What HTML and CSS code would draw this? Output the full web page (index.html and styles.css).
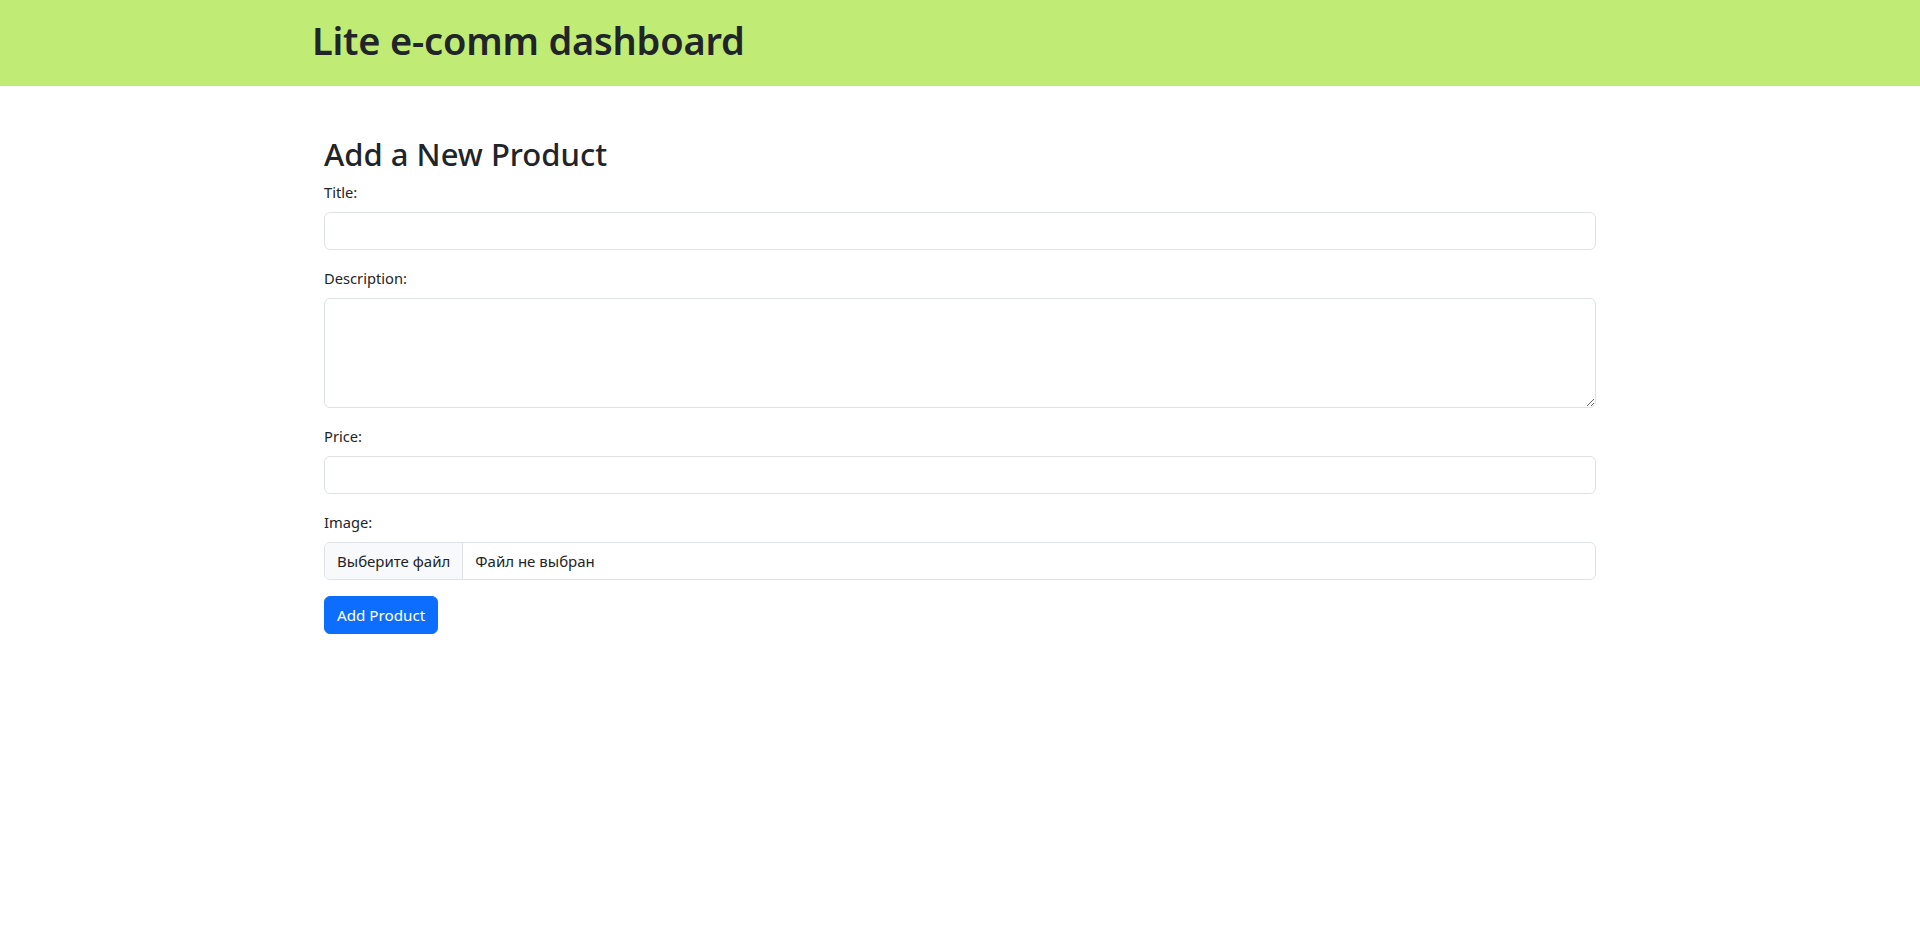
FILE: index.html
```html
<!DOCTYPE html>
<html lang="en">
<head>
<meta charset="utf-8">
<title>Lite e-comm dashboard</title>
<link rel="stylesheet" href="styles.css">
</head>
<body>
<header class="topbar">
  <div class="container">
    <h1 class="brand">Lite e-comm dashboard</h1>
  </div>
</header>
<main class="container main">
  <h2 class="page-title">Add a New Product</h2>
  <form class="product-form">
    <div class="field">
      <label class="field-label" for="title">Title:</label>
      <input class="control" id="title" type="text">
    </div>
    <div class="field">
      <label class="field-label" for="desc">Description:</label>
      <textarea class="control textarea" id="desc" rows="4"></textarea>
    </div>
    <div class="field">
      <label class="field-label" for="price">Price:</label>
      <input class="control" id="price" type="text">
    </div>
    <div class="field">
      <label class="field-label">Image:</label>
      <div class="control file-control">
        <span class="file-btn">Выберите файл</span>
        <span class="file-name">Файл не выбран</span>
      </div>
    </div>
    <button class="submit" type="button">Add Product</button>
  </form>
</main>
</body>
</html>
```

FILE: styles.css
```css
* { box-sizing: border-box; }
html, body { margin: 0; padding: 0; }
body {
  font-family: "Noto Sans", "Open Sans", sans-serif;
  font-size: 16px;
  line-height: 1.5;
  color: #212529;
  background: #fff;
}
.container {
  max-width: 1320px;
  margin: 0 auto;
  padding: 0 12px;
}
.topbar {
  background: #c0ec76;
  height: 86px;
}
.brand {
  margin: 0;
  padding-top: 16px;
  font-size: 38px;
  font-weight: 600;
  line-height: 48px;
  letter-spacing: -0.2px;
}
.main {
  padding: 0 24px;
  margin-top: 49px;
}
.page-title {
  margin: 0 0 7px;
  font-size: 31px;
  font-weight: 500;
  line-height: 38px;
}
.field { margin-bottom: 16px; }
.field-label {
  display: block;
  margin-bottom: 8px;
  font-size: 14.7px;
  line-height: 24px;
}
.control {
  display: block;
  width: 100%;
  height: 38px;
  padding: 6px 12px;
  font: inherit;
  font-size: 15px;
  color: #212529;
  background: #fff;
  border: 1px solid #dee2e6;
  border-radius: 6px;
  outline: none;
}
.textarea {
  height: 110px;
  resize: vertical;
}
.file-control {
  display: flex;
  padding: 0;
  overflow: hidden;
  align-items: stretch;
}
.file-btn {
  display: flex;
  align-items: center;
  padding: 0 12px;
  background: #f8f9fa;
  border-right: 1px solid #dee2e6;
  font-size: 15px;
}
.file-name {
  display: flex;
  align-items: center;
  padding: 0 12px;
  font-size: 15px;
}
.submit {
  display: inline-block;
  height: 38px;
  padding: 0 12px;
  font: inherit;
  font-size: 15.2px;
  color: #fff;
  background: #0d6efd;
  border: 1px solid #0d6efd;
  border-radius: 6px;
}
```
